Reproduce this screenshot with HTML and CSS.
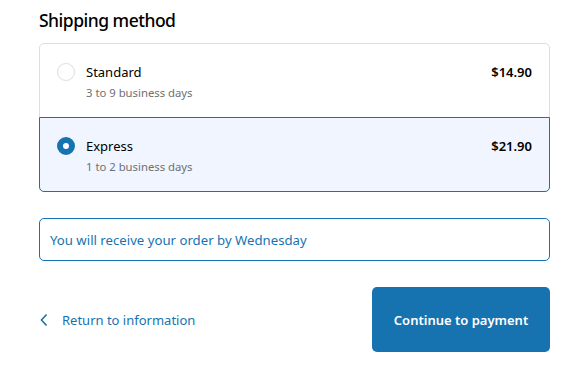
FILE: index.html
```html
<!DOCTYPE html>
<html>
<head>
  <title>Shipping method</title>
  <link rel="stylesheet" href="styles.css">
</head>
<body>
<main class="checkout">
  <h2 class="section-title">Shipping method</h2>

  <div class="rates">
    <label class="rate">
      <span class="radio"></span>
      <span class="rate-info">
        <span class="rate-name">Standard</span>
        <span class="rate-time">3 to 9 business days</span>
      </span>
      <span class="rate-price">$14.90</span>
    </label>
    <label class="rate rate-selected">
      <span class="radio radio-checked"></span>
      <span class="rate-info">
        <span class="rate-name">Express</span>
        <span class="rate-time">1 to 2 business days</span>
      </span>
      <span class="rate-price">$21.90</span>
    </label>
  </div>

  <div class="notice">You will receive your order by Wednesday</div>

  <div class="actions">
    <a href="#" class="back-link">
      <svg class="chevron" width="10" height="14" viewBox="0 0 10 14"><path d="M7.5 1.5 L2.5 7 L7.5 12.5" fill="none" stroke="currentColor" stroke-width="1.6"/></svg>
      Return to information
    </a>
    <button class="continue">Continue to payment</button>
  </div>
</main>
</body>
</html>
```

FILE: styles.css
```css
* { box-sizing: border-box; }

html, body { margin: 0; padding: 0; background: #fff; }

body {
  font-family: "Noto Sans", "Open Sans", sans-serif;
  color: #000;
  padding: 0 35px 0 39px;
}

.section-title {
  font-size: 17.5px;
  letter-spacing: -0.5px;
  font-weight: 500;
  margin: 0;
  padding-top: 8px;
  line-height: 24px;
  height: 43px;
}

.rates {
  border: 1px solid #dedede;
  border-radius: 5px;
}

.rate {
  display: flex;
  align-items: flex-start;
  height: 75px;
  padding: 19px 17px 0 17px;
  border: 1px solid transparent;
  margin: -1px;
}
.rate:first-child { border-radius: 5px 5px 0 0; }

.rate-selected {
  background: #f0f5ff;
  border-color: #1773b0;
  border-radius: 0 0 5px 5px;
}

.radio {
  width: 18px;
  height: 18px;
  border: 1px solid #dedede;
  border-radius: 50%;
  background: #fff;
  margin-right: 11px;
  flex-shrink: 0;
}
.radio-checked {
  border: 6px solid #1773b0;
}

.rate-info {
  flex: 1;
  display: flex;
  flex-direction: column;
}
.rate-name { font-size: 13px; line-height: 20px; margin-top: -1px; }
.rate-time { font-size: 11.3px; line-height: 16px; color: #707070; margin-top: 3px; }

.rate-price {
  font-size: 13px;
  font-weight: 600;
  line-height: 20px;
  margin-top: -1px;
}

.notice {
  margin-top: 26px;
  border: 1px solid #1773b0;
  border-radius: 5px;
  height: 43px;
  padding: 0 10px;
  display: flex;
  align-items: center;
  font-size: 13.2px;
  color: #1773b0;
}

.actions {
  display: flex;
  justify-content: space-between;
  align-items: center;
  margin-top: 26px;
}

.back-link {
  display: flex;
  align-items: center;
  gap: 13px;
  color: #1773b0;
  text-decoration: none;
  font-size: 13px;
}

.continue {
  width: 178px;
  height: 65px;
  border: none;
  border-radius: 5px;
  background: #1773b0;
  color: #fff;
  font-family: inherit;
  font-size: 13px;
  font-weight: 600;
}
```
